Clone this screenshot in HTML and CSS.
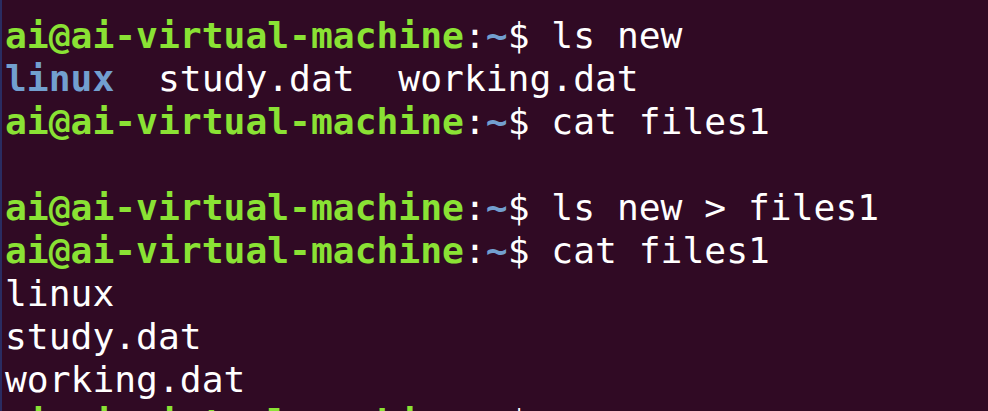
FILE: index.html
```html
<!DOCTYPE html>
<html>
<head>
<meta charset="utf-8">
<link rel="stylesheet" href="styles.css">
</head>
<body>
<div class="term">
<div class="line"><span class="p">ai@ai-virtual-machine</span><span class="c">:</span><span class="d">~</span><span class="w">$ ls new</span></div>
<div class="line"><span class="dir">linux</span><span class="w">  study.dat  working.dat</span></div>
<div class="line"><span class="p">ai@ai-virtual-machine</span><span class="c">:</span><span class="d">~</span><span class="w">$ cat files1</span></div>
<div class="line"> </div>
<div class="line"><span class="p">ai@ai-virtual-machine</span><span class="c">:</span><span class="d">~</span><span class="w">$ ls new &gt; files1</span></div>
<div class="line"><span class="p">ai@ai-virtual-machine</span><span class="c">:</span><span class="d">~</span><span class="w">$ cat files1</span></div>
<div class="line"><span class="w">linux</span></div>
<div class="line"><span class="w">study.dat</span></div>
<div class="line"><span class="w">working.dat</span></div>
<div class="line"><span class="p">ai@ai-virtual-machine</span><span class="c">:</span><span class="d">~</span><span class="w">$ </span></div>
</div>
</body>
</html>
```
FILE: styles.css
```css
html, body {
  margin: 0;
  padding: 0;
  background: #300a24;
  height: 100%;
  overflow: hidden;
}
.term {
  border-left: 2px solid #2a2c62;
  height: 100%;
  box-sizing: border-box;
  padding: 14px 0 0 3px;
  font-family: "DejaVu Sans Mono", "Liberation Mono", monospace;
  font-size: 36.3px;
  line-height: 43px;
  color: #ffffff;
  overflow: hidden;
}
.line {
  height: 43px;
  white-space: pre;
}
.p {
  color: #8ae234;
  font-weight: bold;
}
.c {
  color: #ffffff;
}
.d {
  color: #729fcf;
  font-weight: bold;
}
.dir {
  color: #729fcf;
  font-weight: bold;
}
.w {
  color: #ffffff;
}
```
